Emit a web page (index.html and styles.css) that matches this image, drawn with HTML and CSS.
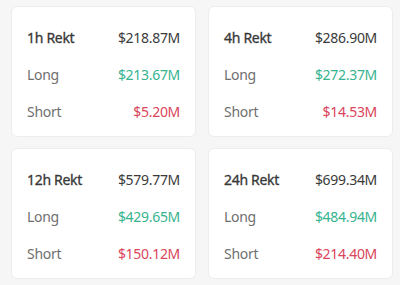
FILE: index.html
```html
<!DOCTYPE html>
<html>
<head>
<meta charset="utf-8">
<link rel="stylesheet" href="styles.css">
</head>
<body>
<div class="grid">
  <div class="card">
    <div class="row"><span class="title">1h Rekt</span><span class="total">$218.87M</span></div>
    <div class="row"><span class="label">Long</span><span class="long">$213.67M</span></div>
    <div class="row"><span class="label">Short</span><span class="short">$5.20M</span></div>
  </div>
  <div class="card">
    <div class="row"><span class="title">4h Rekt</span><span class="total">$286.90M</span></div>
    <div class="row"><span class="label">Long</span><span class="long">$272.37M</span></div>
    <div class="row"><span class="label">Short</span><span class="short">$14.53M</span></div>
  </div>
  <div class="card">
    <div class="row"><span class="title">12h Rekt</span><span class="total">$579.77M</span></div>
    <div class="row"><span class="label">Long</span><span class="long">$429.65M</span></div>
    <div class="row"><span class="label">Short</span><span class="short">$150.12M</span></div>
  </div>
  <div class="card">
    <div class="row"><span class="title">24h Rekt</span><span class="total">$699.34M</span></div>
    <div class="row"><span class="label">Long</span><span class="long">$484.94M</span></div>
    <div class="row"><span class="label">Short</span><span class="short">$214.40M</span></div>
  </div>
</div>
</body>
</html>
```
FILE: styles.css
```css
html, body {
  margin: 0;
  background: #f6f6f6;
}
body {
  padding: 6px 8px 8px 11px;
  font-family: "Noto Sans", "Open Sans", sans-serif;
  font-size: 14px;
  letter-spacing: -0.3px;
}
.grid {
  display: grid;
  grid-template-columns: 185px 185px;
  column-gap: 12px;
  row-gap: 11px;
}
.card {
  background: #ffffff;
  border: 1px solid #ededed;
  border-radius: 6px;
  height: 131px;
  box-sizing: border-box;
  padding: 12px 15px 6px 15px;
  display: flex;
  flex-direction: column;
}
.row {
  height: 37.3px;
  display: flex;
  align-items: center;
  justify-content: space-between;
}
.title {
  color: #383838;
  -webkit-text-stroke: 0.3px #383838;
}
.total {
  color: #3a3a3a;
}
.label {
  color: #6f6f6f;
}
.long {
  color: #36b38f;
}
.short {
  color: #d9455a;
}
```
